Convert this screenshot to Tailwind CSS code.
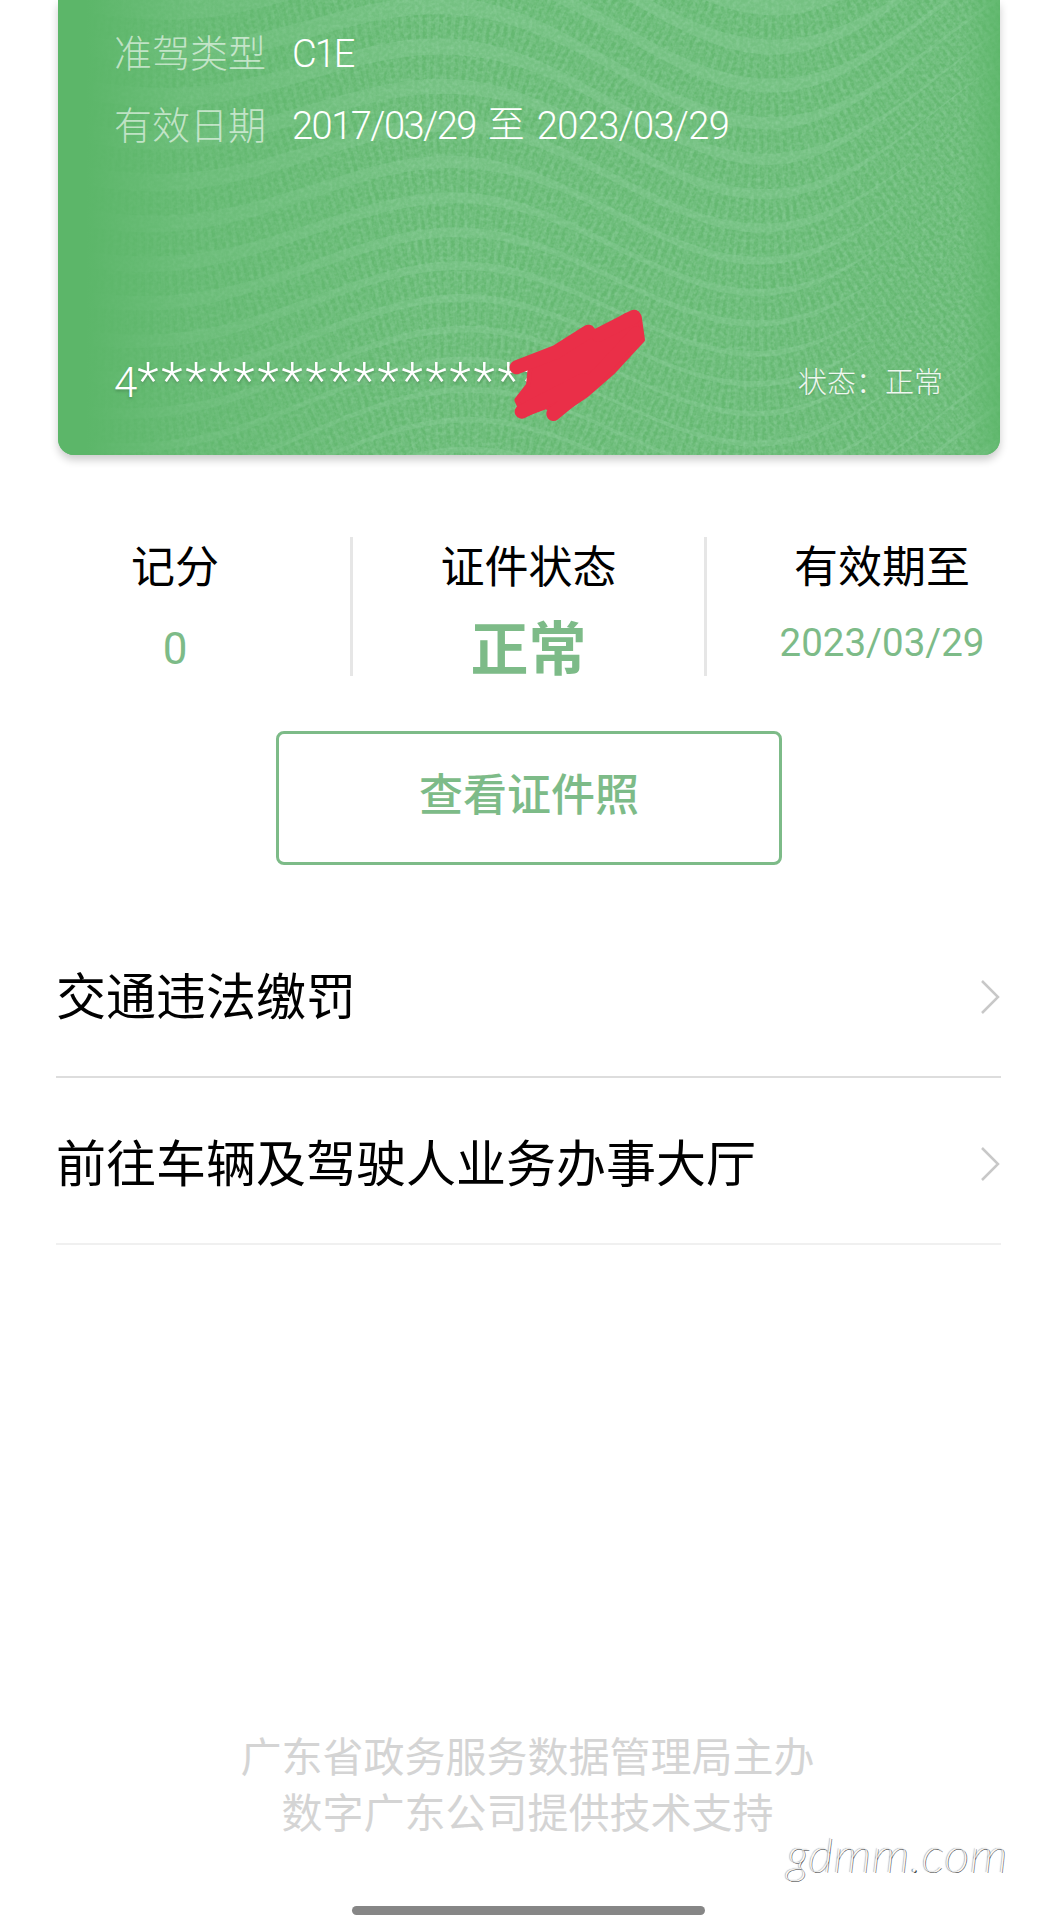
<!DOCTYPE html>
<html lang="zh-CN">

<head>
  <meta charset="UTF-8">
  <meta name="viewport" content="width=device-width, initial-scale=1.0">
  <title>电子驾驶证</title>
  <script src="https://cdn.jsdelivr.net/npm/@tailwindcss/browser@4"></script>
</head>

<body class="bg-white">
  <div class="relative w-[1055px] h-[1920px] overflow-hidden flex flex-col font-['Roboto','Noto_Sans_CJK_SC',sans-serif] text-black">

    <!-- 证件卡片 -->
    <div class="relative shrink-0 mx-[58px] w-[942px] h-[455px] rounded-b-[16px] overflow-hidden bg-[#75c182] shadow-[0_5px_9px_rgba(0,0,0,0.2)]">
      <svg class="absolute inset-0" width="942" height="455" viewBox="0 0 942 455" fill="none">
        <defs>
          <linearGradient id="edge" x1="0" y1="0" x2="1" y2="0">
            <stop offset="0" stop-color="#5cb669" />
            <stop offset="0.03" stop-color="#5cb669" />
            <stop offset="0.14" stop-color="#60b86d" stop-opacity="0.45" />
            <stop offset="0.4" stop-color="#60b86d" stop-opacity="0" />
            <stop offset="0.96" stop-color="#60b86d" stop-opacity="0" />
            <stop offset="1" stop-color="#5cb669" stop-opacity="0.8" />
          </linearGradient>
          <filter id="grain" x="0" y="0" width="100%" height="100%">
            <feTurbulence type="fractalNoise" baseFrequency="0.28" numOctaves="2" seed="4" />
            <feColorMatrix values="0 0 0 0 0.33  0 0 0 0 0.68  0 0 0 0 0.40  1.6 0 0 0 -0.55" />
          </filter>
        </defs>
        <g id="wave-lines"></g>
        <rect width="942" height="455" filter="url(#grain)" opacity="0.55" />
        <rect width="942" height="455" fill="url(#edge)" />
      </svg>

      <div class="relative h-full flex flex-col pl-[56px] pr-[57px] text-white">
        <div class="flex items-center h-[50px] mt-[29px] font-light">
          <span class="w-[178px] text-[38px] text-white/60">准驾类型</span>
          <span class="text-[38px] tracking-[-2px]">C1E</span>
        </div>
        <div class="flex items-center h-[50px] mt-[22px] font-light">
          <span class="w-[178px] text-[38px] text-white/60">有效日期</span>
          <span class="text-[38px] tracking-[-1.5px]">2017/03/29</span>
          <span class="mx-[12px] text-[37px]">至</span>
          <span class="text-[38px] tracking-[-0.65px]">2023/03/29</span>
        </div>
        <div class="mt-auto mb-[47px] flex items-center justify-between">
          <span class="flex items-center h-[50px] font-light [text-shadow:0_2px_3px_rgba(0,0,0,0.2)]">
            <span class="text-[42px] mt-[-2px]">4</span><span class="text-[50px] tracking-[2.8px] translate-y-[-2px]">*****************</span>
          </span>
          <span class="text-[29px] leading-[40px] font-light text-white/90 [text-shadow:0_1px_2px_rgba(0,0,0,0.15)]">状态：正常</span>
        </div>
      </div>
    </div>

    <!-- 记分 / 状态 / 有效期 -->
    <div class="grid grid-cols-[350px_357px_348px] grid-rows-[139px] mt-[82px] h-[139px] shrink-0">
      <div class="flex flex-col items-center pt-[3px]">
        <span class="text-[44px] leading-[56px]">记分</span>
        <span class="mt-[25px] text-[44px] leading-[56px] text-[#7dbb88]">0</span>
      </div>
      <div class="flex flex-col items-center pt-[3px] border-x-[3px] border-[#e6e6e6]">
        <span class="text-[44px] leading-[56px]">证件状态</span>
        <span class="mt-[22px] text-[58px] leading-[64px] font-bold text-[#7dbb88]">正常</span>
      </div>
      <div class="flex flex-col items-center pt-[3px] pl-[2px]">
        <span class="text-[44px] leading-[56px]">有效期至</span>
        <span class="mt-[24px] text-[38.5px] leading-[46px] text-[#7dbb88]">2023/03/29</span>
      </div>
    </div>

    <button class="self-start ml-[276px] mt-[55px] w-[506px] h-[134px] pb-[4px] border-[3px] border-[#7dbb88] rounded-[8px] text-[44px] font-medium text-[#7dbb88]">查看证件照</button>

    <!-- 列表 -->
    <div class="ml-[56px] w-[945px] mt-[46px]">
      <div class="flex items-center justify-between h-[167px] border-b-[2px] border-[#dddddd] pt-[10px] pr-[1px] text-[50px]">
        <span>交通违法缴罚</span>
        <svg class="mb-[3px]" width="20" height="36" viewBox="0 0 20 36" fill="none" stroke="#c8c8c8" stroke-width="2.5"><path d="M2 2 18 18 2 34" /></svg>
      </div>
      <div class="flex items-center justify-between h-[167px] border-b-[2px] border-[#f0f0f0] pt-[10px] pr-[1px] text-[50px]">
        <span>前往车辆及驾驶人业务办事大厅</span>
        <svg class="mb-[3px]" width="20" height="36" viewBox="0 0 20 36" fill="none" stroke="#c8c8c8" stroke-width="2.5"><path d="M2 2 18 18 2 34" /></svg>
      </div>
    </div>

    <!-- 底部 -->
    <div class="mt-auto mb-[78px] flex flex-col items-center text-[41px] leading-[56px] text-[#d4d4d4]">
      <span>广东省政务服务数据管理局主办</span>
      <span>数字广东公司提供技术支持</span>
    </div>

    <div class="absolute left-[352px] top-[1906px] w-[353px] h-[9px] rounded-full bg-[#868686]"></div>

    <!-- 水印 -->
    <span class="absolute left-[787px] top-[1826px] font-['Lato',sans-serif] font-thin italic text-[48px] leading-[56px] tracking-[1px] text-white [text-shadow:1px_1px_0_#333,-1px_0_1px_#777]">gdmm.com</span>

    <!-- 涂抹 -->
    <svg class="absolute left-[480px] top-[290px]" width="200" height="150" viewBox="0 0 600 450" fill="#ea2f48" stroke="#ea2f48" stroke-linecap="round" stroke-linejoin="round">
      <path stroke-width="14" d="M105 225 225 175 320 115 358 128 440 75 478 80 488 150 400 245 320 315 230 375 200 350 130 375 110 330 145 285 150 235Z" />
      <path fill="none" stroke-width="42" d="M110 232 230 185 325 125M355 135 462 80M470 130 320 290 220 372M310 270 125 365" />
    </svg>
  </div>

  <script>
    // 卡片底纹：一组起伏的纹理带
    const group = document.getElementById("wave-lines");
    let html = "";
    for (let i = -6; i < 22; i++) {
      const y0 = i * 37;
      let d = "";
      for (let x = -20; x <= 960; x += 16) {
        const amp = 20 + 60 * x / 942;
        const y = y0 + amp * Math.sin((x - 538) / 650 * 2 * Math.PI) + 40 * Math.sin(x / 470 + i * 0.18);
        d += (d ? " L" : "M") + x + " " + y.toFixed(1);
      }
      html += '<path d="' + d + '" stroke="#5db56a" stroke-opacity="0.28" stroke-width="24" />';
      html += '<path d="' + d + '" stroke="#57b165" stroke-opacity="0.4" stroke-width="24" stroke-dasharray="4 4" />';
    }
    group.innerHTML = html;
  </script>
</body>

</html>
